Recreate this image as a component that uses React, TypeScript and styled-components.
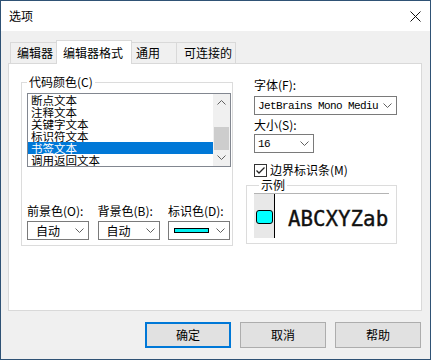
import React from "react";
import styled, { createGlobalStyle } from "styled-components";

const GlobalStyle = createGlobalStyle`
  html, body { margin: 0; padding: 0; background: #ffffff; }
  body { font-family: "Noto Sans CJK SC", "Noto Sans", sans-serif; font-size: 12px; color: #000; }
  * { box-sizing: border-box; }
`;

const Window = styled.div`
  width: 431px;
  height: 360px;
  border: 1px solid #2f5275;
  background: #f0f0f0;
  display: flex;
  flex-direction: column;
`;

const TitleBar = styled.div`
  height: 30px;
  background: #ffffff;
  display: flex;
  align-items: center;
  justify-content: space-between;
  padding: 0 9px 0 8px;
  font-size: 12px;
  flex: none;
`;

const TitleText = styled.span`
  line-height: 16px;
`;

const Body = styled.div`
  flex: 1;
  display: flex;
  flex-direction: column;
  padding: 9px 8px 0 7px;
`;

const TabRow = styled.div`
  height: 23px;
  display: flex;
  align-items: flex-end;
  padding-left: 2px;
`;

const Tab = styled.div<{ $active?: boolean; $w: number; $pl: number }>`
  width: ${(p) => p.$w}px;
  height: ${(p) => (p.$active ? 24 : 21)}px;
  margin-bottom: ${(p) => (p.$active ? -1 : 0)}px;
  margin-left: -1px;
  padding-left: ${(p) => p.$pl}px;
  background: ${(p) => (p.$active ? "#ffffff" : "#f0f0f0")};
  border: 1px solid #d9d9d9;
  border-bottom: none;
  display: flex;
  align-items: center;
  line-height: 16px;
  position: relative;
  z-index: ${(p) => (p.$active ? 2 : 0)};
  &:first-child { margin-left: 0; }
`;

const Panel = styled.div`
  height: 248px;
  width: 414px;
  background: #ffffff;
  border: 1px solid #d9d9d9;
  display: grid;
  grid-template-columns: 212px 151px;
  column-gap: 13px;
  align-items: start;
  padding: 0 0 0 12px;
`;

const Group = styled.fieldset<{ $mt: number }>`
  margin: ${(p) => p.$mt}px 0 0 0;
  padding: 0 1px 5px 5px;
  border: 1px solid #dcdcdc;
  min-width: 0;
`;

const Legend = styled.legend`
  margin-left: 0;
  padding: 0 2px;
  line-height: 14px;
  font-size: 12px;
`;

const ListBox = styled.div`
  margin-top: 4px;
  height: 74px;
  width: 204px;
  border: 1px solid #828790;
  display: flex;
  background: #ffffff;
`;

const ListItems = styled.div`
  flex: 1;
  display: flex;
  flex-direction: column;
`;

const ListItem = styled.div<{ $selected?: boolean }>`
  height: 12px;
  line-height: 12px;
  font-size: 11.5px;
  padding-left: 3px;
  white-space: nowrap;
  background: ${(p) => (p.$selected ? "#0078d7" : "transparent")};
  color: ${(p) => (p.$selected ? "#ffffff" : "#000000")};
`;

const ScrollBar = styled.div`
  width: 17px;
  background: #f0f0f0;
  display: flex;
  flex-direction: column;
  align-items: center;
`;

const ScrollArrow = styled.div`
  height: 17px;
  width: 17px;
  display: flex;
  align-items: center;
  justify-content: center;
`;

const ScrollTrack = styled.div`
  flex: 1;
  width: 100%;
  display: flex;
  flex-direction: column;
  align-items: center;
  padding-top: 16px;
`;

const Thumb = styled.div`
  width: 15px;
  height: 23px;
  background: #cdcdcd;
`;

const ColorGrid = styled.div`
  margin-top: 36px;
  display: grid;
  grid-template-columns: 62px 62px 62px;
  column-gap: 8.5px;
  row-gap: 2px;
`;

const FieldLabel = styled.div<{ $mt?: number }>`
  line-height: 16px;
  height: 16px;
  margin-top: ${(p) => p.$mt ?? 0}px;
  white-space: nowrap;
`;

const Combo = styled.div<{ $w?: number; $mt?: number }>`
  width: ${(p) => (p.$w ? `${p.$w}px` : "100%")};
  height: 19px;
  margin-top: ${(p) => p.$mt ?? 0}px;
  border: 1px solid #7a7a7a;
  background: #ffffff;
  display: flex;
  align-items: center;
  justify-content: space-between;
  padding: 0 4px 0 8px;
`;

const ComboText = styled.span`
  line-height: 16px;
`;

const MonoText = styled.span`
  font-family: "Liberation Mono", "DejaVu Sans Mono", monospace;
  font-size: 11px;
  letter-spacing: -0.6px;
  margin-left: -5px;
  white-space: nowrap;
`;

const Swatch = styled.div`
  width: 35px;
  height: 5px;
  background: #00f0f0;
  border: 1px solid #000;
  margin-left: -3px;
`;

const RightCol = styled.div`
  display: flex;
  flex-direction: column;
  padding-top: 13px;
`;

const Indent = styled.div`
  padding-left: 8px;
  display: flex;
  flex-direction: column;
`;

const CheckRow = styled.div`
  margin-top: 10px;
  height: 14px;
  display: flex;
  align-items: center;
  gap: 3px;
  line-height: 14px;
  white-space: nowrap;
`;

const SampleGroup = styled.fieldset`
  margin: 1px 0 0 0;
  padding: 1px 7px 5px 7px;
  border: 1px solid #dcdcdc;
  min-width: 0;
`;

const SampleLegend = styled.legend`
  margin-left: 5px;
  padding: 0 2px;
  line-height: 14px;
  font-size: 12px;
`;

const Preview = styled.div`
  height: 45px;
  display: flex;
  border-top: 1px solid #b4b4b4;
  background: #ffffff;
  overflow: hidden;
`;

const Gutter = styled.div`
  width: 21px;
  flex: none;
  background: #e8e8e8;
  border-right: 1px solid #000000;
  display: flex;
  align-items: center;
  padding-left: 2px;
  padding-top: 2px;
`;

const Marker = styled.div`
  width: 17px;
  height: 14px;
  border: 1px solid #000;
  border-radius: 3px;
  background: #00ffff;
`;

const SampleText = styled.div`
  padding-left: 13px;
  padding-top: 6px;
  display: flex;
  align-items: center;
  font-family: "DejaVu Sans Mono", "Liberation Mono", monospace;
  font-size: 20.8px;
  white-space: nowrap;
  color: #111;
  -webkit-text-stroke: 0.4px #111;
`;

const Footer = styled.div`
  margin-top: 11px;
  display: flex;
  justify-content: flex-end;
  gap: 9px;
  padding-right: 1px;
`;

const Button = styled.div<{ $default?: boolean }>`
  width: 86px;
  height: 26px;
  background: #e1e1e1;
  border: ${(p) => (p.$default ? "2px solid #0078d7" : "1px solid #adadad")};
  display: flex;
  align-items: center;
  justify-content: center;
  line-height: 16px;
`;

const Chevron = ({ up }: { up?: boolean }) => (
  <svg width="9" height="5" viewBox="0 0 9 5" style={{ display: "block" }}>
    <polyline
      points={up ? "0.5,4.5 4.5,0.5 8.5,4.5" : "0.5,0.5 4.5,4.5 8.5,0.5"}
      fill="none"
      stroke="#606060"
      strokeWidth="1"
    />
  </svg>
);

const CloseIcon = () => (
  <svg width="11" height="11" viewBox="0 0 11 11" style={{ display: "block" }}>
    <path d="M0.5 0.5 L10.5 10.5 M10.5 0.5 L0.5 10.5" stroke="#111" strokeWidth="1" />
  </svg>
);

const CheckBox = () => (
  <svg width="13" height="13" viewBox="0 0 13 13" style={{ display: "block" }}>
    <rect x="0.5" y="0.5" width="12" height="12" fill="#fff" stroke="#333" />
    <polyline points="2.5,6.5 5,9 10.5,3.5" fill="none" stroke="#222" strokeWidth="1.3" />
  </svg>
);

const items = ["断点文本", "注释文本", "关键字文本", "标识符文本", "书签文本", "调用返回文本"];

export default function App() {
  return (
    <>
      <GlobalStyle />
      <Window>
        <TitleBar>
          <TitleText>选项</TitleText>
          <CloseIcon />
        </TitleBar>
        <Body>
          <TabRow>
            <Tab $w={47} $pl={6}>编辑器</Tab>
            <Tab $active $w={76} $pl={6}>编辑器格式</Tab>
            <Tab $w={46} $pl={4}>通用</Tab>
            <Tab $w={60} $pl={7}>可连接的</Tab>
          </TabRow>
          <Panel>
            <Group $mt={11}>
              <Legend>代码颜色(C)</Legend>
              <ListBox>
                <ListItems>
                  {items.map((t) => (
                    <ListItem key={t} $selected={t === "书签文本"}>
                      {t}
                    </ListItem>
                  ))}
                </ListItems>
                <ScrollBar>
                  <ScrollArrow>
                    <Chevron up />
                  </ScrollArrow>
                  <ScrollTrack>
                    <Thumb />
                  </ScrollTrack>
                  <ScrollArrow>
                    <Chevron />
                  </ScrollArrow>
                </ScrollBar>
              </ListBox>
              <ColorGrid>
                <FieldLabel>前景色(O):</FieldLabel>
                <FieldLabel>背景色(B):</FieldLabel>
                <FieldLabel>标识色(D):</FieldLabel>
                <Combo>
                  <ComboText>自动</ComboText>
                  <Chevron />
                </Combo>
                <Combo>
                  <ComboText>自动</ComboText>
                  <Chevron />
                </Combo>
                <Combo>
                  <Swatch />
                  <Chevron />
                </Combo>
              </ColorGrid>
            </Group>
            <RightCol>
              <Indent>
                <FieldLabel>字体(F):</FieldLabel>
                <Combo $w={143} $mt={3}>
                  <MonoText>JetBrains Mono Mediu</MonoText>
                  <Chevron />
                </Combo>
                <FieldLabel $mt={2}>大小(S):</FieldLabel>
                <Combo $w={60} $mt={1}>
                  <MonoText>16</MonoText>
                  <Chevron />
                </Combo>
                <CheckRow>
                  <CheckBox />
                  <span>边界标识条(M)</span>
                </CheckRow>
              </Indent>
              <SampleGroup>
                <SampleLegend>示例</SampleLegend>
                <Preview>
                  <Gutter>
                    <Marker />
                  </Gutter>
                  <SampleText>ABCXYZab</SampleText>
                </Preview>
              </SampleGroup>
            </RightCol>
          </Panel>
          <Footer>
            <Button $default>确定</Button>
            <Button>取消</Button>
            <Button>帮助</Button>
          </Footer>
        </Body>
      </Window>
    </>
  );
}
